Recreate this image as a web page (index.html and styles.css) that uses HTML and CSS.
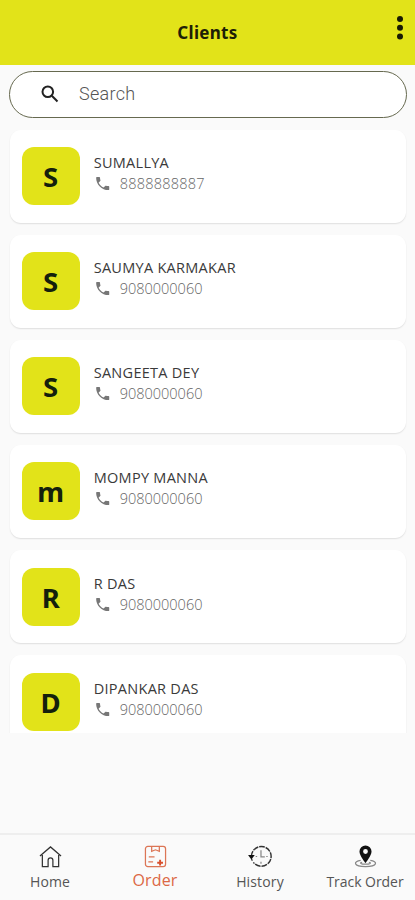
FILE: index.html
```html
<!DOCTYPE html>
<html lang="en">
<head>
<meta charset="utf-8">
<meta name="viewport" content="width=device-width, initial-scale=1">
<title>Clients</title>
<link rel="stylesheet" href="styles.css">
</head>
<body>
<svg class="defs" aria-hidden="true">
  <symbol id="phone" viewBox="0 0 24 24"><path d="M6.500 10.800c1.600 3.100 3.900 5.300 7 6.900l2.300-2.300c.3-.3.7-.4 1-.3 1.200.4 2.400.6 3.700.6.6 0 1 .4 1 1v3.600c0 .6-.4 1-1 1C11 21.300 3 13.300 3 3.800c0-.6.4-1 1-1h3.500c.6 0 1 .4 1 1 0 1.300.2 2.500.6 3.600.1.4 0 .8-.3 1z"/></symbol>
</svg>
<header class="topbar">
  <h1 class="title">Clients</h1>
  <svg class="more" viewBox="0 0 8 26"><circle cx="4" cy="4" r="3"/><circle cx="4" cy="12.800" r="3"/><circle cx="4" cy="21.600" r="3"/></svg>
</header>
<div class="search">
  <svg class="search-icon" viewBox="0 0 18 18"><circle cx="6.800" cy="6.800" r="5.300"/><path d="M10.800 10.800 16.500 16.500"/></svg>
  <span class="placeholder">Search</span>
</div>
<main class="list">
  <article class="card"><div class="avatar">S</div><div class="info"><div class="name">SUMALLYA</div><div class="tel wide"><svg><use href="#phone"/></svg><span>8888888887</span></div></div></article>
  <article class="card"><div class="avatar">S</div><div class="info"><div class="name">SAUMYA KARMAKAR</div><div class="tel"><svg><use href="#phone"/></svg><span>9080000060</span></div></div></article>
  <article class="card"><div class="avatar">S</div><div class="info"><div class="name">SANGEETA DEY</div><div class="tel"><svg><use href="#phone"/></svg><span>9080000060</span></div></div></article>
  <article class="card"><div class="avatar">m</div><div class="info"><div class="name">MOMPY MANNA</div><div class="tel"><svg><use href="#phone"/></svg><span>9080000060</span></div></div></article>
  <article class="card"><div class="avatar">R</div><div class="info"><div class="name">R DAS</div><div class="tel"><svg><use href="#phone"/></svg><span>9080000060</span></div></div></article>
  <article class="card"><div class="avatar">D</div><div class="info"><div class="name">DIPANKAR DAS</div><div class="tel"><svg><use href="#phone"/></svg><span>9080000060</span></div></div></article>
</main>
<nav class="nav">
  <a class="tab">
    <svg viewBox="0 0 24 24"><path d="M1 11.500 12 2l11 9.500M3.500 10.500v12h6V16a2.500 2.500 0 0 1 5 0v6.500h6v-12"/></svg>
    <span>Home</span>
  </a>
  <a class="tab active">
    <svg viewBox="0 0 24 24"><rect x="1.500" y="1.500" width="21" height="21" rx="2.500"/><path d="M8 1.500V6.500l4-1.500 4 1.500V1.500M5 12.500h6M4.500 17.500h5"/><path class="plus" d="M16.800 15.500v6M13.800 18.500h6"/></svg>
    <span>Order</span>
  </a>
  <a class="tab">
    <svg viewBox="0 0 24 24"><path class="arc" d="M2.500 12a10.300 10.300 0 1 1 3.200 7.300"/><path class="dash" d="M2.700 14.500a10.300 10.300 0 0 0 3 4.800"/><path class="faint" d="M12.500 5.500v7h4M12.500 17.500v2M18 12h1.500M7 12h1.500"/><path class="solid" d="M-1 10.500h7L2.500 15z"/></svg>
    <span>History</span>
  </a>
  <a class="tab track">
    <svg viewBox="0 0 24 24"><path class="solid" fill-rule="evenodd" d="M12 .5a6.300 6.300 0 0 0-6.300 6.300c0 4.500 6.300 12 6.300 12s6.300-7.500 6.300-12A6.300 6.300 0 0 0 12 .5zm0 3.800a2.500 2.500 0 1 1 0 5 2.500 2.500 0 0 1 0-5z"/><path class="ring" d="M7 16c-8 1-8 6.600 5 6.600s13-5.600 5-6.600M8.500 18c-3 .5-1.500 2 3.500 2s6.500-1.500 3.500-2"/></svg>
    <span>Track Order</span>
  </a>
</nav>
</body>
</html>
```
FILE: styles.css
```css
* { box-sizing: border-box; }
body {
  margin: 0;
  height: 900px;
  display: flex;
  flex-direction: column;
  overflow: hidden;
  background: #fafafa;
  font-family: "Open Sans", "Noto Sans", sans-serif;
  color: #222;
}
.defs { display: none; }
.topbar {
  flex: none;
  height: 64.500px;
  background: #e2e319;
  display: grid;
  grid-template-columns: 1fr auto 1fr;
}
.title {
  grid-column: 2;
  margin: 21px 0 0;
  font: 700 17px/24px "Noto Sans", sans-serif;
  letter-spacing: .3px;
  color: #1d2006;
}
.more { width: 8px; height: 26px; margin: 15px 11px 0 0; justify-self: end; fill: #171904; }
.search {
  flex: none;
  height: 47px;
  margin: 6px 8.500px 0 9px;
  border: 1px solid #66694f;
  border-radius: 24px;
  background: #fff;
  display: flex;
  align-items: center;
  padding-left: 31px;
}
.search-icon { width: 18px; height: 18px; fill: none; stroke: #222; stroke-width: 2; }
.placeholder { margin-left: 20px; font: 300 18px/24px Roboto, sans-serif; color: #555; letter-spacing: .3px; }
.list {
  flex: none;
  height: 615px;
  padding: 12px 9.500px 0 10px;
  overflow: hidden;
  display: flex;
  flex-direction: column;
  gap: 12.150px;
}
.card {
  flex: none;
  height: 93px;
  border-radius: 11px;
  background: #fff;
  box-shadow: 0 1px 1.500px #0000001c;
  display: flex;
  padding: 17.500px 11.700px;
}
.avatar {
  width: 58px;
  height: 58px;
  border-radius: 12px;
  background: #e2e319;
  font: 700 27.500px/60px "Noto Sans", sans-serif;
  text-align: center;
  color: #14200c;
}
.info { margin: 5px 0 0 14px; }
.name { font-size: 14.500px; line-height: 22px; white-space: nowrap; color: #3a3a3a; letter-spacing: .28px; }
.tel { display: flex; align-items: center; height: 19px; font-size: 14.500px; font-weight: 300; color: #666; }
.tel svg { width: 17px; height: 17px; fill: #777; margin-right: 9px; }
.wide { letter-spacing: .22px; }
.nav {
  margin-top: auto;
  height: 67px;
  border-top: 2px solid #eee;
  display: grid;
  grid-template-columns: repeat(4, 105px);
  margin-left: -2.500px;
}
.tab { display: flex; flex-direction: column; align-items: center; padding-top: 10px; font-size: 14px; line-height: 24px; color: #555; letter-spacing: .15px; white-space: nowrap; }
.tab svg { width: 23px; height: 23px; overflow: visible; fill: none; stroke: #333; stroke-width: 1.300; }
.tab span { margin-top: 1.500px; }
.track { letter-spacing: -.05px; }
.active { color: #dc6845; font-size: 16px; }
.active svg { stroke: #dc7555; }
.active span { margin-top: 0; }
.tab .plus { stroke: #d94f2c; stroke-width: 2; }
.tab .solid { fill: #111; stroke: none; }
.tab .arc { stroke-width: 1.500; stroke-dasharray: 6 1; }
.tab .dash { stroke-dasharray: 2 2; }
.tab .faint { stroke: #888; }
.tab .ring { stroke: #888; }
```
